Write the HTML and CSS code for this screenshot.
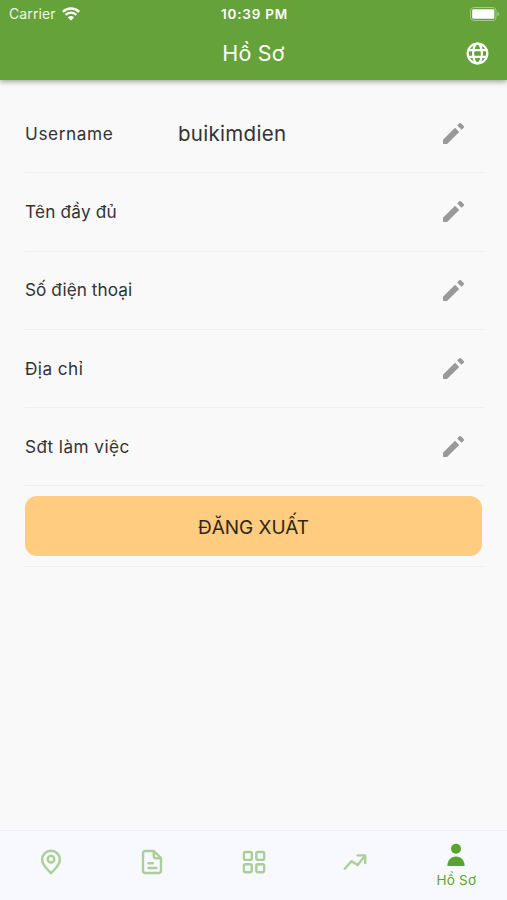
FILE: index.html
```html
<!DOCTYPE html>
<html lang="vi">
<head>
    <meta charset="UTF-8">
    <meta name="viewport" content="width=device-width, initial-scale=1.0">
    <title>Hồ Sơ</title>
    <link rel="stylesheet" href="styles.css">
</head>
<body>
    <svg class="sprite" width="0" height="0">
        <symbol id="pencil" viewBox="3 3 18 18">
            <path d="M3 17.8V20.4q0 .6.6.6h2.6q.3 0 .5-.2L16.9 10.7l-3.6-3.6L3.2 17.2q-.2.2-.2.6zM20.71 7.04a1 1 0 0 0 0-1.41l-2.34-2.34a1 1 0 0 0-1.41 0l-1.83 1.83 3.75 3.75 1.83-1.83z"/>
        </symbol>
    </svg>

    <div class="app">
        <header class="header">
            <div class="status-bar">
                <div class="carrier">
                    <span>Carrier</span>
                    <svg class="wifi" viewBox="0 0 18 14">
                        <path d="M0.8 4.8a11.7 11.7 0 0 1 16.4 0" />
                        <path d="M3.6 7.8a7.7 7.7 0 0 1 10.8 0" />
                        <path class="dot" d="M5.9 10.4a4.4 4.4 0 0 1 6.2 0L9 13.6z" />
                    </svg>
                </div>
                <span class="time">10:39 PM</span>
                <div class="battery-wrap">
                    <svg class="battery" viewBox="0 0 30 14">
                        <rect class="shell" x="0.5" y="0.5" width="25.5" height="13" rx="3.2" />
                        <rect class="level" x="2.2" y="2.2" width="22.1" height="9.6" rx="1.4" />
                        <path class="cap" d="M27.4 5v4q1.8-.6 1.8-2t-1.8-2z" />
                    </svg>
                </div>
            </div>
            <div class="title-bar">
                <h1>Hồ Sơ</h1>
                <svg class="globe" viewBox="0 0 22 22">
                    <circle cx="11" cy="11" r="9.4" />
                    <ellipse cx="11" cy="11" rx="4.2" ry="9.4" />
                    <path d="M2.3 7.8h17.4M2.3 14.2h17.4" />
                </svg>
            </div>
        </header>

        <main class="profile">
            <div class="row">
                <span class="label username">Username</span>
                <span class="value">buikimdien</span>
                <svg class="edit"><use href="#pencil" /></svg>
            </div>
            <div class="row">
                <span class="label fullname">Tên đầy đủ</span>
                <svg class="edit"><use href="#pencil" /></svg>
            </div>
            <div class="row">
                <span class="label phone">Số điện thoại</span>
                <svg class="edit"><use href="#pencil" /></svg>
            </div>
            <div class="row">
                <span class="label address">Địa chỉ</span>
                <svg class="edit"><use href="#pencil" /></svg>
            </div>
            <div class="row">
                <span class="label work">Sđt làm việc</span>
                <svg class="edit"><use href="#pencil" /></svg>
            </div>
            <div class="logout-row">
                <button class="logout">ĐĂNG XUẤT</button>
            </div>
        </main>

        <nav class="tabs">
            <a class="tab">
                <svg viewBox="0 0 26 26">
                    <path d="M13 24.2C8.6 19.8 4.1 15.6 4.1 10.7a8.9 8.9 0 0 1 17.8 0C21.9 15.6 17.4 19.8 13 24.2z" />
                    <circle cx="13" cy="10.2" r="3.3" />
                </svg>
            </a>
            <a class="tab">
                <svg viewBox="0 0 26 26">
                    <path d="M14.8 2H6.2a2.2 2.2 0 0 0-2.2 2.2v17.6a2.2 2.2 0 0 0 2.2 2.2h13.6a2.2 2.2 0 0 0 2.2-2.2V9.2zM14.8 2v5a2.2 2.2 0 0 0 2.2 2.2h5" />
                    <path d="M9.4 14.2h4.4M9.4 19h8" />
                </svg>
            </a>
            <a class="tab">
                <svg viewBox="0 0 26 26">
                    <rect x="2.9" y="3" width="7.9" height="7.9" rx="1.6" />
                    <rect x="15.3" y="3" width="7.9" height="7.9" rx="1.6" />
                    <rect x="2.9" y="15.3" width="7.9" height="7.9" rx="1.6" />
                    <rect x="15.3" y="15.3" width="7.9" height="7.9" rx="1.6" />
                </svg>
            </a>
            <a class="tab">
                <svg viewBox="0 0 26 26">
                    <path d="M2.8 19.8l6.7-7.6 6.2 3.9 7.1-9.4M15.6 6.4h7.6v7.7" />
                </svg>
            </a>
            <a class="tab active">
                <svg viewBox="0 0 26 26">
                    <circle cx="13" cy="6.8" r="5" />
                    <path d="M4.4 24c0-5.7 3.5-9.4 8.6-9.4s8.6 3.7 8.6 9.4z" />
                </svg>
                <span>Hồ Sơ</span>
            </a>
        </nav>
    </div>
</body>
</html>
```
FILE: styles.css
```css
* {
    margin: 0;
    padding: 0;
    box-sizing: border-box;
}
body {
    font-family: Inter, "Noto Sans", sans-serif;
    background-color: #f9f9f9;
    color: #333;
}
.sprite {
    display: block;
}
.app {
    height: 900px;
    display: flex;
    flex-direction: column;
}
.header {
    height: 80px;
    background-color: #65a33a;
    color: white;
    box-shadow: 0 2px 5px rgba(0,0,0,0.35);
}
.status-bar {
    height: 27px;
    padding: 0 7px 0 9px;
    display: grid;
    grid-template-columns: 1fr auto 1fr;
    align-items: center;
    font-size: 14px;
}
.carrier {
    display: flex;
    align-items: center;
    gap: 6px;
    color: #eef8e6;
    letter-spacing: 0.1px;
}
.wifi {
    width: 18px;
    height: 14px;
    fill: none;
    stroke: white;
    stroke-width: 2.4;
}
.wifi .dot {
    fill: white;
    stroke: none;
}
.time {
    font-size: 13.5px;
    font-weight: 600;
    letter-spacing: 0.8px;
}
.battery-wrap {
    display: flex;
    justify-content: flex-end;
}
.battery {
    width: 30px;
    height: 14px;
    fill: white;
}
.battery .shell {
    fill: none;
    stroke: #a6cb8c;
}
.battery .cap {
    fill: #a6cb8c;
}
.title-bar {
    height: 52px;
    padding: 0 18px;
    display: grid;
    grid-template-columns: 1fr auto 1fr;
    align-items: center;
}
h1 {
    grid-column: 2;
    font-size: 21.5px;
    font-weight: 400;
    letter-spacing: 0.2px;
}
.globe {
    justify-self: end;
    width: 23px;
    height: 23px;
    fill: none;
    stroke: white;
    stroke-width: 2.1;
}
.profile {
    flex: 1;
    padding: 15px 22px 0 25px;
}
.row {
    height: 78.3px;
    display: flex;
    align-items: center;
    border-bottom: 1px solid #efefef;
}
.label {
    width: 153px;
    font-size: 17.2px;
    line-height: 20px;
    white-space: nowrap;
}
.username {
    letter-spacing: 0.6px;
}
.fullname {
    letter-spacing: 0.2px;
}
.phone {
    letter-spacing: 0.05px;
}
.address {
    letter-spacing: 0.45px;
}
.work {
    letter-spacing: 0.45px;
}
.value {
    font-size: 20.5px;
    line-height: 24px;
    letter-spacing: 0.3px;
}
.edit {
    width: 21px;
    height: 21px;
    margin-left: auto;
    margin-right: 21px;
    fill: #999;
}
.logout-row {
    padding: 9.5px 3px 9.5px 0;
    border-bottom: 1px solid #efefef;
}
.logout {
    display: block;
    width: 100%;
    height: 60.5px;
    padding-top: 2px;
    border: none;
    border-radius: 12px;
    background-color: #ffcc80;
    color: #302718;
    font-family: inherit;
    font-size: 19px;
}
.tabs {
    height: 70px;
    display: flex;
    background-color: #f8f8ff;
    border-top: 1px solid #f0f0f3;
}
.tab {
    flex: 1;
    display: flex;
    flex-direction: column;
    align-items: center;
    padding: 18px 0 0;
    color: #aacf98;
}
.tab svg {
    width: 26px;
    height: 26px;
    fill: none;
    stroke: currentColor;
    stroke-width: 2.4;
    stroke-linejoin: round;
    stroke-linecap: round;
}
.tab.active {
    gap: 4px;
    padding: 11px 0 0;
    color: #58a42f;
    font-size: 13.5px;
    letter-spacing: 0.2px;
}
.tab.active svg {
    fill: currentColor;
    stroke: none;
}
```
